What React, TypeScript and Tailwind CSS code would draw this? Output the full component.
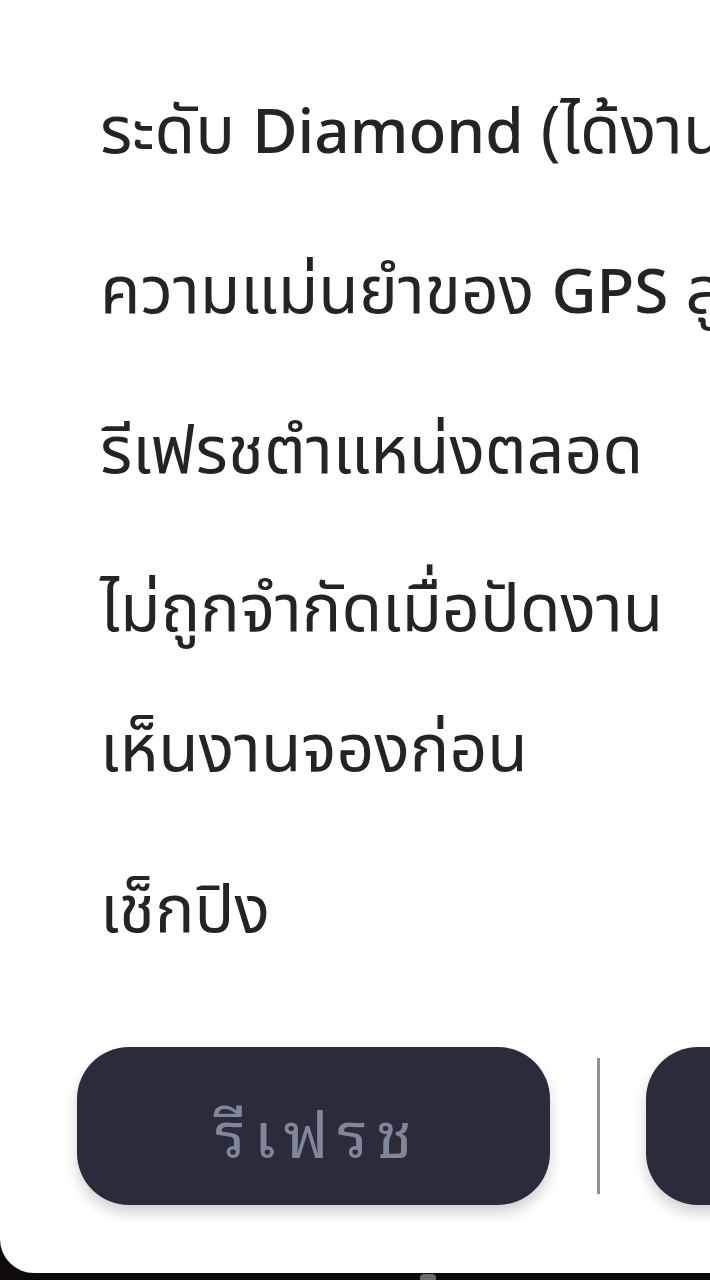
import React from "react";

const L = ({ children }: { children: React.ReactNode }) => (
  <span className="text-[62px] font-medium">{children}</span>
);

const items: { t: React.ReactNode; cls: string }[] = [
  { t: <>ระดับ <L>Diamond</L> (ได้งานก่อนใคร)</>, cls: "h-[160px]" },
  { t: <>ความแม่นยำของ <L>GPS</L> สูงสุด</>, cls: "h-[160px]" },
  { t: "รีเฟรชตำแหน่งตลอด", cls: "h-[158px]" },
  { t: "ไม่ถูกจำกัดเมื่อปัดงาน", cls: "h-[140px]" },
  { t: "เห็นงานจองก่อน", cls: "h-[161px]" },
  { t: "เช็กปิง", cls: "h-[160px]" },
];

export default function App() {
  return (
    <div className="relative w-[710px] h-[1280px] overflow-hidden bg-[#0e0a0a]">
      <div className="w-[1000px] h-[1273px] bg-white rounded-bl-[34px] flex flex-col">
        <div
          className="pl-[100px] pt-[77px] text-[#242424] text-[66px] leading-[100px] whitespace-nowrap"
          style={{ fontFamily: '"Noto Sans", "Noto Sans Thai", sans-serif' }}
        >
          {items.map((it, i) => (
            <div key={i} className={it.cls}>
              {it.t}
            </div>
          ))}
        </div>
        <div className="flex items-center pl-[77px] mt-auto mb-[68px]">
          <button
            className="shrink-0 w-[473px] h-[158px] rounded-[52px] bg-[#2a2d39] text-[#7f889b] text-[64px] tracking-[9px] shadow-[0_8px_14px_rgba(0,0,0,0.18)] flex items-center justify-center pt-[6px] pl-[9px]"
            style={{ fontFamily: '"Noto Sans Thai Looped", "Noto Serif Thai", "Noto Sans Thai", "Noto Sans", sans-serif' }}
          >
            รีเฟรช
          </button>
          <div className="shrink-0 w-[3px] h-[136px] bg-[#8791a3] ml-[47px] mr-[46px]" />
          <button className="shrink-0 w-[473px] h-[158px] rounded-[52px] bg-[#2a2d39] shadow-[0_8px_14px_rgba(0,0,0,0.18)]" />
        </div>
      </div>
      <div className="absolute left-[420px] bottom-0 w-[16px] h-[6px] bg-[#6b6b6b] rounded-t-sm" />
    </div>
  );
}
